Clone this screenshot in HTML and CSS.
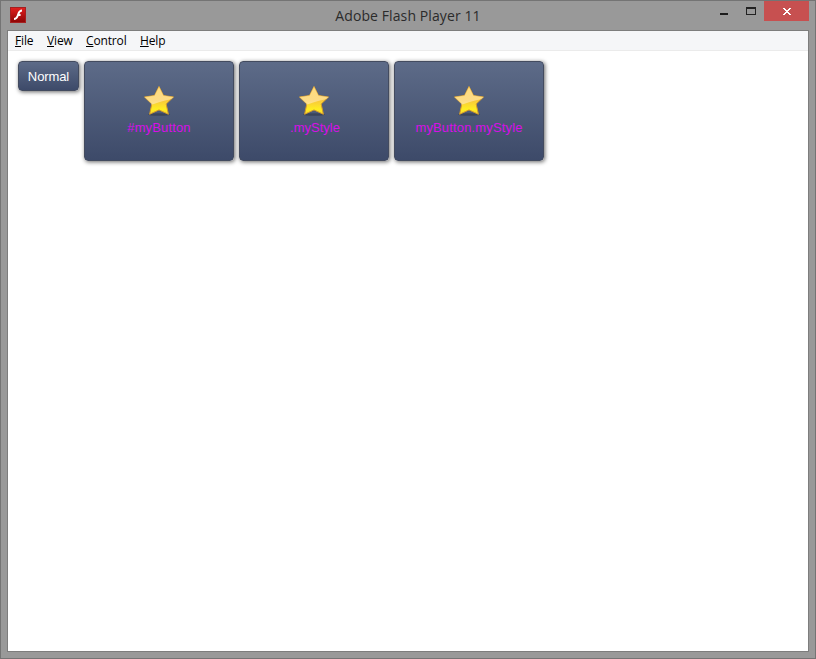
FILE: index.html
```html
<!DOCTYPE html>
<html lang="en">
<head>
<meta charset="utf-8">
<title>Adobe Flash Player 11</title>
<link rel="stylesheet" href="styles.css">
</head>
<body>
<svg class="defs" aria-hidden="true">
  <defs>
    <linearGradient id="gold" x1="0" y1="0" x2="0" y2="1"><stop offset="0" stop-color="#ffe27c"/><stop offset=".5" stop-color="#f8c73c"/><stop offset=".82" stop-color="#ffee20"/><stop offset="1" stop-color="#f8d530"/></linearGradient>
    <linearGradient id="shine" x1="0" y1="0" x2="0" y2="1"><stop offset="0" stop-color="#ffd878"/><stop offset="1" stop-color="#ffe8b4"/></linearGradient>
    <linearGradient id="red" x1="0" y1="0" x2="0" y2="1"><stop offset="0" stop-color="#e3201f"/><stop offset="1" stop-color="#8c0505"/></linearGradient>
    <clipPath id="starclip"><path d="M16 1.500 20.500 10.500 30.500 12 23.200 19 25.400 29.300 16 24.900 6.600 29.300 8.800 19 1.500 12 11.500 10.500Z"/></clipPath>
    <symbol id="star" viewBox="0 0 32 32">
      <ellipse cx="16" cy="29.5" rx="11" ry="1.3" fill="#252b38" opacity=".45"/>
      <path d="M16 1.500 20.500 10.500 30.500 12 23.200 19 25.400 29.300 16 24.900 6.600 29.300 8.800 19 1.500 12 11.500 10.500Z" fill="url(#gold)" stroke="#d39a2c" stroke-width="1" stroke-linejoin="round"/>
      <path clip-path="url(#starclip)" d="M0 0H32V13Q27 14.500 22 15.500T8 20H0Z" fill="url(#shine)" opacity=".7"/>
    </symbol>
  </defs>
</svg>
<div class="window">
  <header class="titlebar">
    <svg class="app-icon" viewBox="0 0 16 16"><rect x=".5" y=".5" width="15" height="15" fill="url(#red)" stroke="#a52020"/><path d="M12 3.600C8.800 3.600 8.600 6.500 7.600 9 6.800 11 6 12.100 4 12.100M7.400 7.900H10.600" fill="none" stroke="#fff" stroke-width="2"/></svg>
    <h1 class="title">Adobe Flash Player 11</h1>
    <div class="controls">
      <svg class="min" viewBox="0 0 8 2"><path d="M0 0H8V2H0Z" fill="#1c1c1c"/></svg>
      <svg class="max" viewBox="0 0 10 8"><path d="M0 0H10V8H0ZM1 2V7H9V2Z" fill="#222" fill-rule="evenodd"/></svg>
      <span class="close"><svg viewBox="0 0 8 7" shape-rendering="crispEdges"><path d="M0 0H2V1H3V2H5V1H6V0H8V1H7V2H6V3H5V4H6V5H7V6H8V7H6V6H5V5H3V6H2V7H0V6H1V5H2V4H3V3H2V2H1V1H0Z" fill="#fff"/></svg></span>
    </div>
  </header>
  <main class="client">
    <nav class="menu">
      <span class="file"><u>F</u>ile</span><span class="view"><u>V</u>iew</span><span class="control"><u>C</u>ontrol</span><span class="help"><u>H</u>elp</span>
    </nav>
    <section class="stage">
      <button class="btn normal">Normal</button>
      <button class="btn large"><svg class="star"><use href="#star"/></svg><span class="label">#myButton</span></button>
      <button class="btn large"><svg class="star"><use href="#star"/></svg><span class="label short">.myStyle</span></button>
      <button class="btn large"><svg class="star"><use href="#star"/></svg><span class="label">myButton.myStyle</span></button>
    </section>
  </main>
</div>
</body>
</html>
```
FILE: styles.css
```css
* { box-sizing: border-box; }
body { margin: 0; overflow: hidden; }
.defs { position: absolute; width: 0; height: 0; }
.window {
  width: 816px;
  height: 659px;
  display: flex;
  flex-direction: column;
  padding: 0 6px 6px;
  background: #999;
  border: 1px solid #747474;
}
.titlebar {
  height: 29px;
  flex: none;
  display: grid;
  grid-template-columns: 200px 1fr 200px;
}
.app-icon { width: 16px; height: 16px; margin: 6px 0 0 3px; }
.title {
  margin: 4px 0 0;
  text-align: center;
  white-space: nowrap;
  font: 400 14px/22px "Open Sans", "Noto Sans", sans-serif;
  letter-spacing: 0.1px;
  color: #2b2b2b;
}
.controls { display: flex; justify-content: flex-end; }
.min { width: 8px; height: 2px; margin: 12px 18px 0 0; }
.max { width: 10px; height: 8px; margin: 6px 8px 0 0; }
.close {
  width: 45px;
  height: 20px;
  background: #c75050;
  display: flex;
  justify-content: center;
  align-items: center;
}
.close svg { width: 8px; height: 7px; }
.client { flex: 1; border: 1px solid #7d7d7d; background: #fff; }
.menu {
  height: 20px;
  display: flex;
  padding-left: 7px;
  background: #f5f6f8;
  border-bottom: 1px solid #ebebeb;
  font: 12px/20px "Open Sans", "Noto Sans", sans-serif;
  letter-spacing: -0.15px;
  color: #000;
}
.menu u { text-underline-offset: 1px; text-decoration-thickness: 1px; }
.file { width: 32px; }
.view { width: 39px; }
.control { width: 54px; }
.stage { display: flex; align-items: flex-start; gap: 5px; padding: 10px; }
.btn {
  margin: 0;
  padding: 0;
  border: 1px solid #434b5f;
  border-radius: 4px;
  background: linear-gradient(#5d6b88, #3d4a69);
  box-shadow: 1px 1px 4px rgba(0, 0, 0, .6);
  font: 13px/16px "Liberation Sans", Arial, sans-serif;
  color: #d80ee8;
}
.normal { width: 61px; height: 30px; padding-top: 1px; color: #fff; line-height: 27px; letter-spacing: -0.1px; }
.large {
  width: 150px;
  height: 100px;
  display: flex;
  flex-direction: column;
  align-items: center;
  justify-content: flex-start;
  padding-top: 23px;
}
.star { width: 32px; height: 32px; flex: none; margin-bottom: 3px; }
.label { letter-spacing: 0.15px; }
.short { letter-spacing: 0; padding-left: 2px; }
```
